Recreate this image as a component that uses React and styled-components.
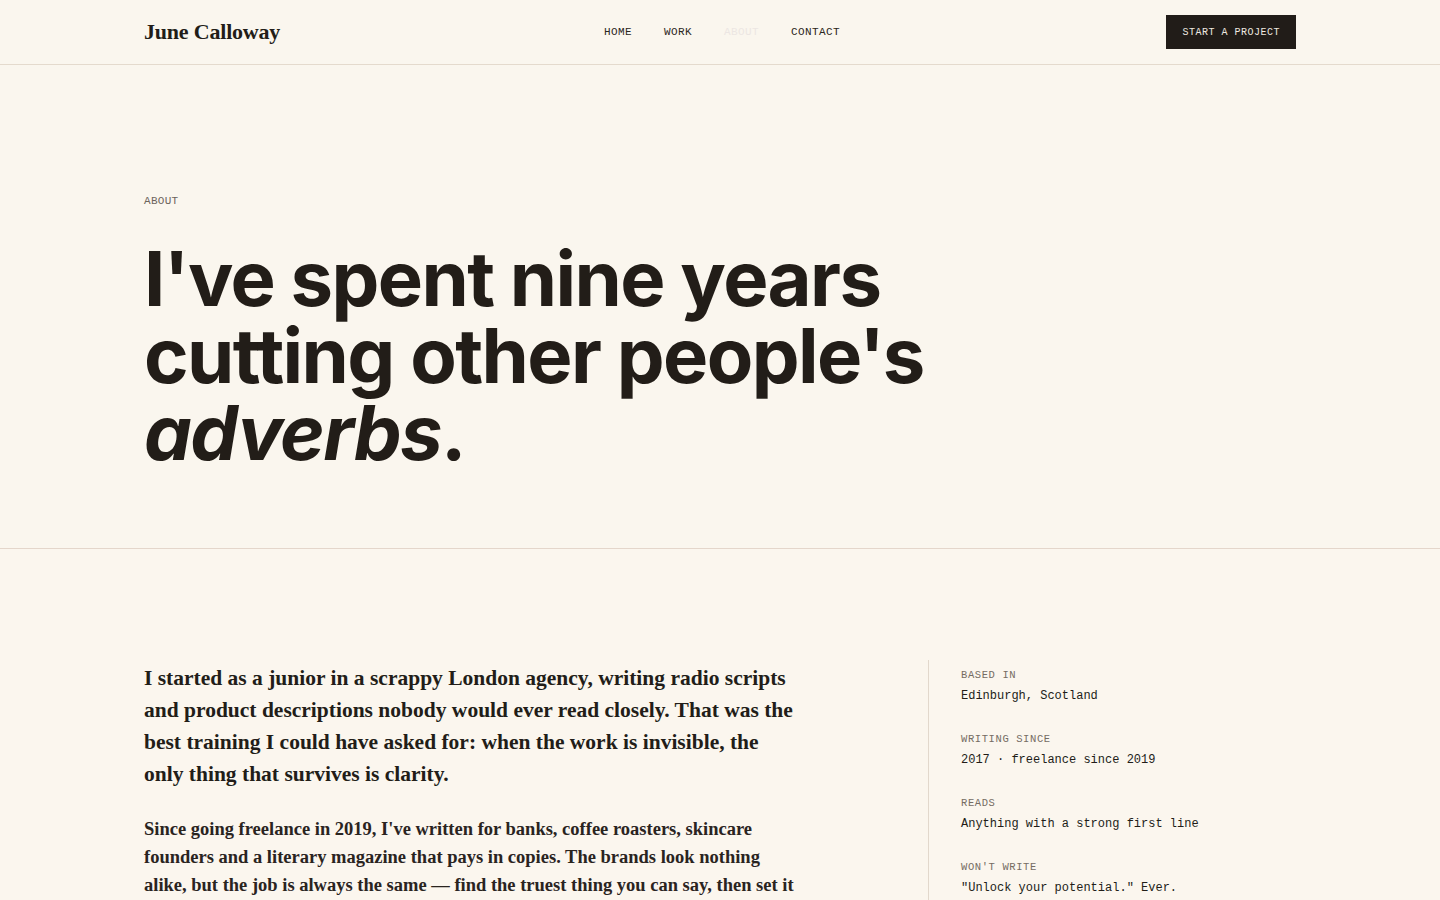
import React from "react";
import styled, { createGlobalStyle } from "styled-components";

const GlobalStyle = createGlobalStyle`
  * { box-sizing: border-box; }
  body {
    margin: 0;
    background: #faf6ee;
    color: #221d18;
    font-family: "Liberation Serif", serif;
  }
`;

const mono = `"Liberation Mono", "DejaVu Sans Mono", monospace`;

const Page = styled.div`
  min-height: 100vh;
  background: #faf6ee;
`;

const Wrap = styled.div`
  width: 1152px;
  margin: 0 auto;
`;

const Header = styled.header`
  height: 65px;
  border-bottom: 1px solid #e4dacd;
`;

const HeaderInner = styled(Wrap)`
  height: 100%;
  display: grid;
  grid-template-columns: 1fr auto 1fr;
  align-items: center;
`;

const Logo = styled.a`
  font-family: "Liberation Serif", serif;
  font-weight: 700;
  font-size: 22px;
  letter-spacing: -0.2px;
  color: #221d18;
  text-decoration: none;
`;

const Nav = styled.nav`
  display: flex;
  gap: 32px;
  margin-left: 4px;
`;

const NavLink = styled.a`
  font-family: ${mono};
  font-size: 11px;
  letter-spacing: 0.4px;
  text-transform: uppercase;
  color: ${(p) => (p.$active ? "#ece6e3" : "#2b2520")};
  text-decoration: none;
`;

const CtaWrap = styled.div`
  display: flex;
  justify-content: flex-end;
`;

const Cta = styled.a`
  display: inline-flex;
  align-items: center;
  height: 34px;
  padding: 0 16px;
  background: #211c18;
  color: #efe9e0;
  font-family: ${mono};
  font-size: 10px;
  letter-spacing: 0.5px;
  text-transform: uppercase;
  text-decoration: none;
`;

const Hero = styled.section`
  border-bottom: 1px solid #e4d6cb;
`;

const HeroInner = styled(Wrap)`
  padding: 130px 0 77px;
`;

const Eyebrow = styled.div`
  font-family: ${mono};
  font-size: 11px;
  letter-spacing: 0.3px;
  color: #6c645c;
  text-transform: uppercase;
  margin-bottom: 33px;
`;

const Headline = styled.h1`
  margin: 0;
  font-family: Inter, "Noto Sans", sans-serif;
  font-weight: 700;
  font-size: 76px;
  line-height: 77px;
  letter-spacing: -1.6px;
  color: #221d18;

  em {
    font-style: italic;
  }
`;

const Body = styled.section`
  background: #fbf6ee;
`;

const BodyInner = styled(Wrap)`
  display: grid;
  grid-template-columns: 1fr 368px;
  padding-top: 111px;
`;

const Story = styled.div`
  padding-top: 2px;
`;

const Lead = styled.p`
  margin: 0 0 25px;
  font-size: 21.5px;
  line-height: 32px;
  font-weight: 700;
  color: #221d18;
`;

const Para = styled.p`
  margin: 0;
  font-size: 18.5px;
  line-height: 28px;
  font-weight: 700;
  color: #2a241f;
`;

const Facts = styled.aside`
  border-left: 1px solid #e2d8cc;
  padding: 7px 0 0 32px;
  display: flex;
  flex-direction: column;
  gap: 27px;
  min-height: 300px;
`;

const Fact = styled.div`
  display: flex;
  flex-direction: column;
  gap: 5px;
`;

const FactLabel = styled.span`
  font-family: ${mono};
  font-size: 10.5px;
  letter-spacing: 0.6px;
  line-height: 16px;
  text-transform: uppercase;
  color: #756c63;
`;

const FactValue = styled.span`
  font-family: ${mono};
  font-size: 12px;
  line-height: 16px;
  color: #221d18;
`;

const facts = [
  ["Based in", "Edinburgh, Scotland"],
  ["Writing since", "2017 · freelance since 2019"],
  ["Reads", "Anything with a strong first line"],
  ["Won't write", '"Unlock your potential." Ever.'],
];

export default function App() {
  return (
    <Page>
      <GlobalStyle />
      <Header>
        <HeaderInner>
          <Logo href="#">June Calloway</Logo>
          <Nav>
            <NavLink href="#">Home</NavLink>
            <NavLink href="#">Work</NavLink>
            <NavLink href="#" $active>About</NavLink>
            <NavLink href="#">Contact</NavLink>
          </Nav>
          <CtaWrap>
            <Cta href="#">Start a project</Cta>
          </CtaWrap>
        </HeaderInner>
      </Header>

      <Hero>
        <HeroInner>
          <Eyebrow>About</Eyebrow>
          <Headline>
            I've spent nine years
            <br />
            cutting other people's
            <br />
            <em>adverbs</em>.
          </Headline>
        </HeroInner>
      </Hero>

      <Body>
        <BodyInner>
          <Story>
            <Lead>
              I started as a junior in a scrappy London agency, writing radio scripts
              <br />
              and product descriptions nobody would ever read closely. That was the
              <br />
              best training I could have asked for: when the work is invisible, the
              <br />
              only thing that survives is clarity.
            </Lead>
            <Para>
              Since going freelance in 2019, I've written for banks, coffee roasters, skincare
              <br />
              founders and a literary magazine that pays in copies. The brands look nothing
              <br />
              alike, but the job is always the same — find the truest thing you can say, then set it
              <br />
              down plainly and get out of the way.
            </Para>
          </Story>
          <Facts>
            {facts.map(([label, value]) => (
              <Fact key={label}>
                <FactLabel>{label}</FactLabel>
                <FactValue>{value}</FactValue>
              </Fact>
            ))}
          </Facts>
        </BodyInner>
      </Body>
    </Page>
  );
}
